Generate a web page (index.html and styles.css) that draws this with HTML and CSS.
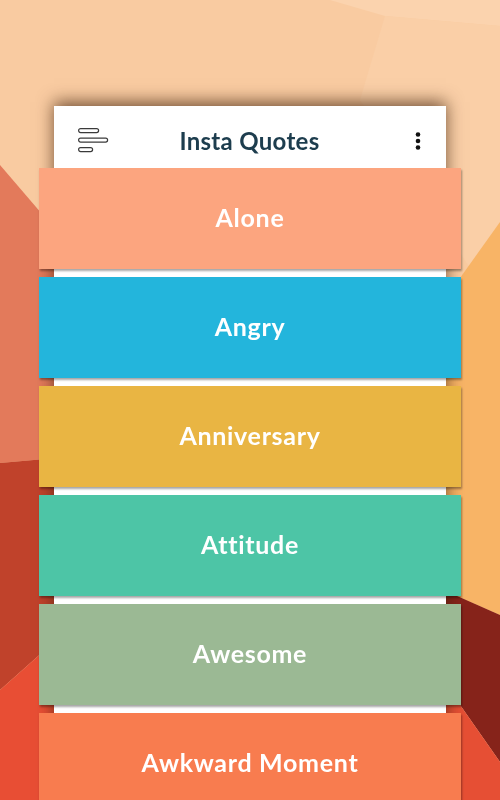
FILE: index.html
```html
<!DOCTYPE html>
<html lang="en">
<head>
  <meta charset="UTF-8">
  <title>Insta Quotes</title>
  <meta name="viewport" content="width=device-width, initial-scale=1">
  <link rel="stylesheet" href="styles.css">
</head>
<body>
  <svg class="backdrop" viewBox="0 0 500 800" preserveAspectRatio="none">
    <rect width="500" height="800" fill="#f9cba1"/>
    <polygon points="330,0 500,0 500,26 385,16" fill="#fbd3ae"/>
    <polygon points="385,16 500,26 500,222 470,268 360,100" fill="#facfa7"/>
    <polygon points="0,165 90,270 90,455 0,463" fill="#e37a5b"/>
    <polygon points="0,463 90,455 90,610 0,690" fill="#c0422b"/>
    <polygon points="0,690 90,610 90,800 0,800" fill="#e84e34"/>
    <polygon points="500,222 430,320 430,584 500,615" fill="#f8b466"/>
    <polygon points="430,584 500,615 500,762 430,662" fill="#86231a"/>
    <polygon points="430,662 500,762 500,800 430,800" fill="#e64f34"/>
  </svg>

  <main class="card">
    <header class="bar">
      <svg class="menu" width="31" height="25" viewBox="0 0 31 25">
        <rect x="0.6" y="0.6" width="20" height="4" rx="2" fill="#fff" stroke="#3b3b3b" stroke-width="1.2"/>
        <rect x="0.6" y="10.1" width="29" height="4" rx="2" fill="#fff" stroke="#3b3b3b" stroke-width="1.2"/>
        <rect x="0.6" y="19.6" width="14" height="4" rx="2" fill="#fff" stroke="#3b3b3b" stroke-width="1.2"/>
      </svg>
      <h1 class="title">Insta Quotes</h1>
      <svg class="more" width="6" height="18" viewBox="0 0 6 18">
        <circle cx="3" cy="2.5" r="2.3" fill="#111"/>
        <circle cx="3" cy="9" r="2.3" fill="#111"/>
        <circle cx="3" cy="15.5" r="2.3" fill="#111"/>
      </svg>
    </header>

    <ul class="topics">
      <li class="topic alone">Alone</li>
      <li class="topic angry">Angry</li>
      <li class="topic anniversary">Anniversary</li>
      <li class="topic attitude">Attitude</li>
      <li class="topic awesome">Awesome</li>
      <li class="topic awkward">Awkward Moment</li>
    </ul>
  </main>
</body>
</html>
```

FILE: styles.css
```css
body {
  margin: 0;
  padding: 0;
  height: 800px;
  overflow: hidden;
  font-family: 'Lato', 'Open Sans', sans-serif;
}
.backdrop {
  position: fixed;
  top: 0;
  left: 0;
  width: 500px;
  height: 800px;
  z-index: 0;
}
.card {
  position: relative;
  z-index: 1;
  width: 392px;
  margin: 106px 0 0 54px;
  min-height: 720px;
  background: #fff;
  box-shadow: 0 -4px 16px rgba(60, 30, 10, 0.7);
}
.bar {
  height: 62px;
  box-sizing: border-box;
  padding: 7px 25px 0 24px;
  display: grid;
  grid-template-columns: 1fr auto 1fr;
  align-items: center;
}
.menu {
  display: block;
}
.more {
  display: block;
  justify-self: end;
}
.title {
  margin: 0;
  font-size: 24px;
  font-weight: 700;
  color: #1d3d4e;
  letter-spacing: 0.3px;
}
.topics {
  list-style: none;
  margin: 0 -15px;
  padding: 0;
}
.topic {
  height: 101px;
  box-sizing: border-box;
  padding-bottom: 3px;
  margin-bottom: 8px;
  display: flex;
  align-items: center;
  justify-content: center;
  color: #fff;
  font-size: 25px;
  font-weight: 700;
  letter-spacing: 0.7px;
  box-shadow: 1px 2px 2px rgba(0, 0, 0, 0.35);
}
.alone { background: #fca57f; }
.angry { background: #23b5dc; }
.anniversary { background: #e9b543; }
.attitude { background: #4dc5a6; }
.awesome { background: #9bb994; }
.awkward { background: #f87c4f; }
```
